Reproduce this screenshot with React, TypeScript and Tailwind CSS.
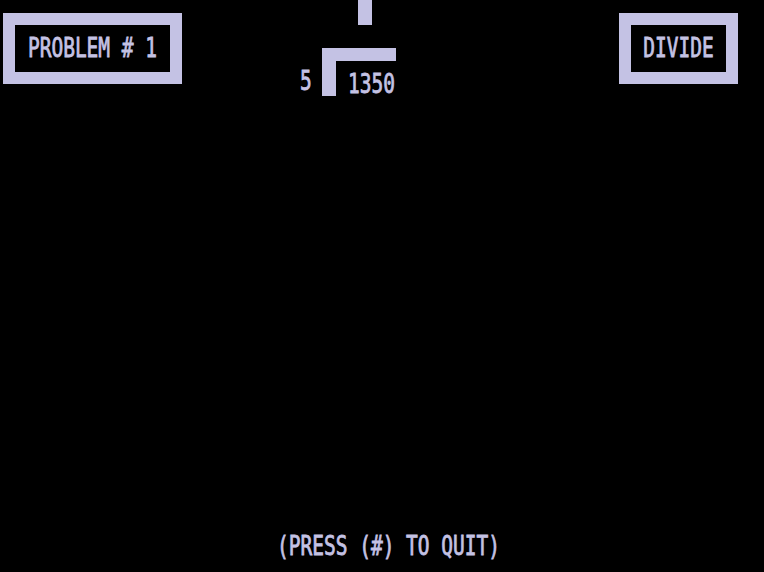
import { FC, ReactNode } from 'react'

// tall, narrow terminal lettering
const Txt: FC<{ children: ReactNode }> = ({ children }) => (
    <span
        className="inline-block origin-center scale-y-[1.36] whitespace-pre text-[19.5px] leading-[20px] font-normal text-[#c4c2e4] [-webkit-text-stroke:0.6px_#c4c2e4]"
        style={{ fontFamily: '"DejaVu Sans Mono", "Liberation Mono", monospace' }}
    >
        {children}
    </span>
)

const Box: FC<{ width: string; children: ReactNode }> = ({ width, children }) => (
    <div className={`${width} h-[71px] border-[12px] border-[#c4c2e4] bg-black flex items-center justify-center`}>
        <Txt>{children}</Txt>
    </div>
)

const App: FC = () => {
    return (
        <div className="w-[764px] h-[572px] bg-black flex flex-col overflow-hidden">
            <div className="flex items-start">
                <div className="ml-[3px] mt-[13px]">
                    <Box width="w-[179px]">PROBLEM # 1</Box>
                </div>

                {/* long division sign */}
                <div className="ml-[118px] w-[96px] flex flex-col">
                    <div className="ml-[58px] w-[14px] h-[25px] bg-[#c4c2e4]" />
                    <div className="mt-[23px] flex items-end">
                        <div className="w-[22px] pb-[2px]">
                            <Txt>5</Txt>
                        </div>
                        <div className="w-[74px] h-[48px] border-t-[13px] border-l-[14px] border-[#c4c2e4] pl-[12px] pt-[12px]">
                            <Txt>1350</Txt>
                        </div>
                    </div>
                </div>

                <div className="flex-1" />
                <div className="mr-[26px] mt-[13px]">
                    <Box width="w-[119px]">DIVIDE</Box>
                </div>
            </div>

            <div className="flex-1" />
            <div className="flex justify-center pb-[15px] pl-[13px]">
                <Txt>(PRESS (#) TO QUIT)</Txt>
            </div>
        </div>
    )
}

export default App
